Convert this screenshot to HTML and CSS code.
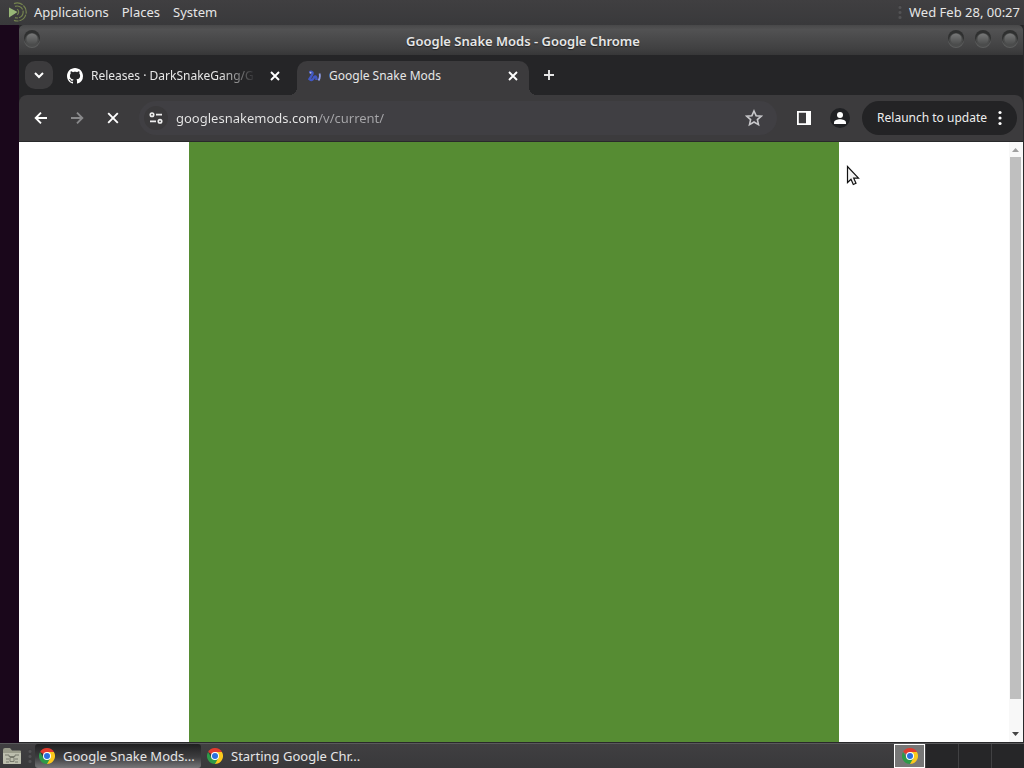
FILE: index.html
```html
<!DOCTYPE html>
<html lang="en">
<head>
<meta charset="utf-8">
<title>Google Snake Mods - Google Chrome</title>
<link rel="stylesheet" href="styles.css">
</head>
<body>
<svg class="defs" width="0" height="0" aria-hidden="true">
  <symbol id="close" viewBox="0 0 16 16"><path d="M4 4l8 8M12 4l-8 8" fill="none" stroke="currentColor" stroke-width="1.9"/></symbol>
  <symbol id="chrome" viewBox="0 0 16 16">
    <path d="M8 8L1.07 4A8 8 0 0 1 14.93 4Z" fill="#e23b2e"/>
    <path d="M8 8V4H14.93A8 8 0 0 1 8 16Z" fill="#fbc91d"/>
    <path d="M1.07 4L4.6 10L11.4 10L8 16A8 8 0 0 1 1.07 4Z" fill="#2d9a48"/>
    <circle cx="8" cy="8" r="4" fill="#fff"/><circle cx="8" cy="8" r="3" fill="#2b6fdd"/>
  </symbol>
  <symbol id="orb" viewBox="0 0 20 20">
    <circle cx="10" cy="11" r="8" fill="#5b5c5c"/><circle cx="10" cy="9" r="8" fill="#2f3030"/>
    <circle cx="10" cy="11" r="7" fill="#4b4c4c"/><circle cx="10" cy="10" r="5.500" fill="url(#orbfill)"/>
  </symbol>
  <linearGradient id="orbfill" x1="0" y1="0" x2="0" y2="1"><stop offset="0" stop-color="#777878"/><stop offset="1" stop-color="#4b4c4c"/></linearGradient>
</svg>
<header class="panel panel-top">
  <svg class="mate" viewBox="0 0 20 20" width="20" height="20" aria-hidden="true">
    <path d="M2 5.500L10.500 10L2 15.500Z" fill="#98b777"/>
    <path d="M7 1.600A9 9 0 1 1 7 18.400M8 4.400A6 6 0 1 1 8 15.600M10 7.300A3 3 0 0 1 10 12.700" fill="none" stroke="#75844f" stroke-width="1.200" stroke-dasharray="9 1"/>
  </svg>
  <nav class="menus"><button>Applications</button><button>Places</button><button>System</button></nav>
  <span class="grip"></span>
  <time class="clock">Wed Feb 28, 00:27</time>
</header>
<main class="desktop">
  <section class="window">
    <div class="titlebar">
      <button class="orb" aria-label="Window menu"><svg><use href="#orb"/></svg></button>
      <h1>Google Snake Mods - Google Chrome</h1>
      <div class="window-buttons">
        <button class="orb" aria-label="Minimize"><svg><use href="#orb"/></svg></button>
        <button class="orb" aria-label="Maximize"><svg><use href="#orb"/></svg></button>
        <button class="orb" aria-label="Close window"><svg><use href="#orb"/></svg></button>
      </div>
    </div>
    <div class="tabstrip">
      <button class="tab-search" aria-label="Search tabs"><svg viewBox="0 0 16 16" width="16" height="16"><path d="M4 6l4 4 4-4" fill="none" stroke="currentColor" stroke-width="2"/></svg></button>
      <div class="tab">
        <svg viewBox="0 0 16 16" width="16" height="16" aria-hidden="true"><path fill="#fff" d="M8 0C3.580 0 0 3.580 0 8c0 3.540 2.290 6.530 5.470 7.590.4.070.55-.17.55-.38 0-.19-.01-.82-.01-1.490-2.010.37-2.530-.49-2.690-.94-.09-.23-.48-.94-.82-1.130-.28-.15-.68-.52-.01-.53.63-.01 1.080.58 1.230.82.72 1.210 1.870.87 2.330.66.070-.52.28-.87.51-1.070-1.780-.2-3.640-.89-3.640-3.950 0-.87.31-1.590.82-2.150-.08-.2-.36-1.020.08-2.120 0 0 .67-.21 2.200.82.64-.18 1.320-.27 2-.27s1.360.09 2 .27c1.530-1.040 2.200-.82 2.200-.82.44 1.100.16 1.920.08 2.120.51.56.82 1.270.82 2.150 0 3.070-1.870 3.750-3.650 3.950.29.25.54.73.54 1.480 0 1.070-.01 1.930-.01 2.200 0 .21.15.46.55.38A8.010 8.010 0 0 0 16 8c0-4.420-3.580-8-8-8z"/></svg>
        <button class="tab-title">Releases · DarkSnakeGang/G</button>
        <button class="tab-close" aria-label="Close Releases"><svg width="16" height="16"><use href="#close"/></svg></button>
      </div>
      <div class="tab active">
        <svg viewBox="0 0 16 16" width="16" height="16" aria-hidden="true"><path d="M4.500 4.500C6.500 3 8.500 4.500 7 7L4.500 11C7 13 8 11.500 9 9.500S11.500 8 11.500 12" fill="none" stroke="#4258c4" stroke-width="2.400"/><path d="M14.500 5.500C15.500 8.500 15 10 13.500 12.500" fill="none" stroke="#8f9de6" stroke-width="1.800"/><circle cx="5.500" cy="4.800" r="1" fill="#a6b0ee"/></svg>
        <button class="tab-title">Google Snake Mods</button>
        <button class="tab-close" aria-label="Close Google Snake Mods"><svg width="16" height="16"><use href="#close"/></svg></button>
      </div>
      <button class="new-tab" aria-label="New tab"><svg viewBox="0 0 16 16" width="16" height="16"><path d="M8 3v10M3 8h10" stroke="currentColor" stroke-width="1.900"/></svg></button>
    </div>
    <div class="toolbar">
      <button class="icon" aria-label="Back"><svg viewBox="0 0 16 16" width="16" height="16"><path d="M14 8H3M8 2.700L2.700 8L8 13.300" fill="none" stroke="currentColor" stroke-width="1.900"/></svg></button>
      <button class="icon dim" aria-label="Forward" disabled><svg viewBox="0 0 16 16" width="16" height="16"><path d="M2 8h11M8 2.700L13.300 8L8 13.300" fill="none" stroke="currentColor" stroke-width="1.900"/></svg></button>
      <button class="icon" aria-label="Stop loading"><svg viewBox="0 0 16 16" width="16" height="16"><path d="M3.200 3.200l9.600 9.600M12.800 3.200l-9.600 9.600" stroke="currentColor" stroke-width="1.900"/></svg></button>
      <div class="omnibox">
        <button class="site-info" aria-label="Site information"><svg viewBox="0 0 16 16" width="16" height="16"><g fill="none" stroke="currentColor" stroke-width="1.700"><circle cx="4" cy="4.700" r="1.700"/><path d="M8 4.700h6M2 11.300h6"/><circle cx="12" cy="11.300" r="1.700"/></g></svg></button>
        <input type="text" aria-label="Address" value="googlesnakemods.com/v/current/">
        <button class="icon star" aria-label="Bookmark this tab"><svg viewBox="0 0 18 18" width="18" height="18"><path d="M9 2L11.100 6.700L16.200 7.200L12.400 10.600L13.500 15.600L9 13L4.500 15.600L5.600 10.600L1.800 7.200L6.900 6.700Z" fill="none" stroke="currentColor" stroke-width="1.600"/></svg></button>
      </div>
      <button class="icon" aria-label="Side panel"><svg viewBox="0 0 16 16" width="16" height="16"><path d="M1.900 1.800h12.200v12.400H1.900z" fill="none" stroke="currentColor" stroke-width="1.800"/><path d="M10 1h5v14h-5z" fill="currentColor"/></svg></button>
      <button class="icon" aria-label="Profile"><svg viewBox="0 0 20 20" width="20" height="20"><circle cx="10" cy="10" r="10" fill="#202124"/><circle cx="10" cy="7" r="3" fill="#fff"/><path d="M4 16v-1.500C4 12 7.500 11.200 10 11.200S16 12 16 14.500V16Z" fill="#fff"/></svg></button>
      <button class="relaunch"><span>Relaunch to update</span><svg viewBox="0 0 4 16" width="4" height="16" aria-hidden="true"><circle cx="2" cy="2.500" r="1.600"/><circle cx="2" cy="8" r="1.600"/><circle cx="2" cy="13.500" r="1.600"/></svg></button>
    </div>
    <div class="viewport">
      <div class="page"><div class="game"></div></div>
      <div class="scrollbar">
        <svg viewBox="0 0 14 14" width="14" height="14"><path d="M3 10L6.500 6L10 10Z" fill="#a0a0a0"/></svg>
        <div class="track"><div class="thumb"></div></div>
        <svg viewBox="0 0 14 14" width="14" height="14"><path d="M3 4L6.500 8L10 4Z" fill="#444"/></svg>
      </div>
    </div>
  </section>
</main>
<footer class="panel panel-bottom">
  <button class="files" aria-label="Show desktop"><svg viewBox="0 0 20 20" width="20" height="20"><path d="M1 4q0-2 2-2h5l2 2.500h8q1 0 1 1V17q0 1-1 1H2q-1 0-1-1Z" fill="#9a9c8b"/><path d="M1 7h18v10q0 1-1 1H2q-1 0-1-1Z" fill="#bdbfae"/><path d="M3 9h4v1.500h6V9h4M4 13h3m6 0h3M4 16h3m6 0h3M8 11.500h4v4H8z" fill="none" stroke="#77796c"/></svg></button>
  <span class="grip"></span>
  <div class="tasks">
    <button class="task current"><svg width="16" height="16"><use href="#chrome"/></svg><span>Google Snake Mods...</span></button>
    <button class="task"><svg width="16" height="16"><use href="#chrome"/></svg><span>Starting Google Chr...</span></button>
  </div>
  <div class="workspaces">
    <button class="selected" aria-label="Workspace 1"><svg width="16" height="16"><use href="#chrome"/></svg></button>
    <button aria-label="Workspace 2"></button><button aria-label="Workspace 3"></button><button aria-label="Workspace 4"></button>
  </div>
</footer>
<svg class="cursor" viewBox="0 0 14 21" width="14" height="21" aria-hidden="true"><path d="M1.500 1.500V17.500L5 14.200L7.300 19.500L10 18.300L7.700 13.200H12.500Z" fill="#f3f3f3" stroke="#111" stroke-width="1.200"/></svg>
</body>
</html>
```
FILE: styles.css
```css
* { box-sizing: border-box; }
body {
  margin: 0;
  height: 100vh;
  display: flex;
  flex-direction: column;
  overflow: hidden;
  background: #1a071b;
  color: #e6e6e6;
  font: 13px/20px "Noto Sans", sans-serif;
}
button, input { font: inherit; color: inherit; background: none; border: 0; padding: 0; margin: 0; }
button { display: flex; align-items: center; justify-content: center; }
svg { display: block; flex: none; }
.defs { position: absolute; }

.panel { display: flex; align-items: center; flex: none; height: 25px; background: linear-gradient(#403f41, #39393b); }
.panel-top { padding: 0 4px 2px 7px; }
.menus { display: flex; gap: 13px; margin-left: 7px; flex: 1; }
.grip { width: 4px; height: 14px; background: radial-gradient(circle, #525254 1px, #3c3b3d 2px) 0 0 / 4px 5px; }
.clock { margin-left: 7px; }

.desktop { flex: 1; min-height: 0; display: flex; padding-left: 19px; }
.window { flex: 1; min-width: 0; display: flex; flex-direction: column; background: #252527; border-right: 1px solid #29292b; border-bottom: 1px solid #29292b; }
.titlebar { display: grid; grid-template-columns: 1fr auto 1fr; align-items: center; height: 30px; flex: none; padding: 2px 3px 0; background: linear-gradient(#484849, #525253 15%, #404041 80%, #373738); border-radius: 5px 5px 0 0; }
.titlebar h1 { margin: 0 0 0 4px; font-size: 13px; line-height: 20px; font-weight: 600; text-shadow: 0 1px 1px #222; }
.orb { width: 20px; height: 20px; }
.orb svg { width: 20px; height: 20px; }
.titlebar .orb { align-self: start; margin-top: 2px; }
.window-buttons { display: flex; gap: 7px; justify-content: flex-end; align-self: start; }

.tabstrip { display: flex; align-items: flex-start; height: 40px; flex: none; padding: 6px 6px 0; gap: 6px; background: #252527; }
.tab-search { width: 28px; height: 28px; border-radius: 10px; background: #3c3b3d; color: #fff; }
.tab { width: 232px; height: 34px; display: flex; align-items: center; padding: 0 8px 5px; gap: 8px; }
.tab-title { flex: 1; min-width: 0; justify-content: flex-start; overflow: hidden; white-space: nowrap; font-size: 12px; }
.tab:not(.active) .tab-title { mask-image: linear-gradient(90deg, #000 calc(100% - 36px), transparent); }
.tab-close { width: 16px; height: 16px; margin-left: 3px; color: #fff; }
.tab.active { background: #3c3b3d; border-radius: 10px 10px 0 0; position: relative; }
.tab.active::before, .tab.active::after { content: ""; position: absolute; bottom: 0; width: 8px; height: 8px; }
.tab.active::before { right: 100%; background: radial-gradient(circle at 0 0, transparent 8px, #3c3b3d 8px); }
.tab.active::after { left: 100%; background: radial-gradient(circle at 100% 0, transparent 8px, #3c3b3d 8px); }
.new-tab { width: 28px; height: 28px; }

.toolbar { display: flex; align-items: center; gap: 8px; height: 47px; flex: none; padding: 0 6px 0 8px; background: #3c3b3d; border-bottom: 1px solid #29292b; border-radius: 8px 8px 0 0; }
.icon { width: 28px; height: 28px; color: #fff; }
.icon.dim { color: #89898b; }
.omnibox { flex: 1; min-width: 0; display: flex; align-items: center; height: 34px; margin: 0 5px 0 4px; padding: 0 9px 0 5px; border-radius: 17px; background: #403f43; }
.site-info { width: 24px; height: 24px; border-radius: 12px; background: #3a393b; color: #eee; }
.omnibox input { flex: 1; min-width: 0; height: 24px; margin-left: 8px; outline: 0; color: transparent; background: linear-gradient(90deg, #e8e8e8 143px, #a7a7aa 143px) text; }
.star { color: #c7c7ca; }
.relaunch { height: 34px; padding: 0 15px; gap: 11px; border-radius: 17px; background: #232325; color: #eee; fill: #fff; white-space: nowrap; font-size: 12px; }

.viewport { flex: 1; min-height: 0; display: flex; background: #fff; }
.page { flex: 1; display: flex; justify-content: center; }
.game { width: 100%; max-width: 650px; background: #568c33; }
.scrollbar { width: 14px; display: flex; flex-direction: column; background: #f8f8f8; }
.track { flex: 1; padding-top: 1px; }
.thumb { height: 95%; margin: 0 2px 0 1px; background: #bfbfbf; }

.panel-bottom { border-top: 1px solid #59595b; padding-left: 2px; }
.grip + .tasks { margin-left: 3px; }
.files { margin-right: 6px; }
.tasks { flex: 1; min-width: 0; display: flex; gap: 2px; }
.task { width: 166px; height: 24px; justify-content: flex-start; padding: 0 4px; gap: 8px; border-radius: 3px; white-space: nowrap; }
.task.current { background: linear-gradient(#1f1f20, #3d3d3f 55%, #777779); }
.workspaces { display: flex; height: 24px; gap: 1px; background: #414143; }
.workspaces button { width: 32px; background: #262628; }
.workspaces .selected { width: 31px; border: 1px solid #fff; background: #777; }
.cursor { position: absolute; left: 846px; top: 165px; }
```
